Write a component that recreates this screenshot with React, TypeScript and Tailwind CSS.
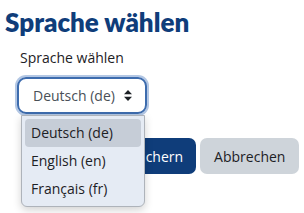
import React from 'react';

const options = ['Deutsch (de)', 'English (en)', 'Français (fr)'];

export default function App() {
  return (
    <div
      className="relative w-[304px] h-[213px] overflow-hidden bg-white"
      style={{ fontFamily: '"Open Sans", "Noto Sans", sans-serif' }}
    >
      <h2
        className="pl-[5px] pt-[7px] text-[26px] leading-[30px] font-extrabold text-[#0f3d7a]"
        style={{ fontFamily: 'Lato, "Open Sans", sans-serif' }}
      >
        Sprache wählen
      </h2>

      <div className="pl-[20px] mt-[11px] text-[14px] leading-[20px] text-[#1d2125]">Sprache wählen</div>

      {/* select with open list */}
      <div className="relative ml-[17px] mt-[9px] w-[130px]">
        <div className="flex h-[37px] items-center justify-between rounded-[9px] border-2 border-[#3d6cae] pl-[14px] pr-[13px] text-[14px] text-[#495057] ring-2 ring-[#b3c7e4]">
          <span>Deutsch (de)</span>
          <svg width="8" height="11" viewBox="0 0 8 11">
            <path d="M4 0 L8 4.2 L0 4.2 Z M4 11 L8 6.8 L0 6.8 Z" fill="#1d2125" />
          </svg>
        </div>

        <div className="absolute left-[4px] top-[38px] z-10 w-[124px] rounded-b-[6px] border border-[#aeb3ba] bg-[#e5ebf4] px-[3px] pt-[3px] pb-[3px] shadow-[0_3px_8px_rgba(0,0,0,0.18)]">
          {options.map((o, i) => (
            <div
              key={o}
              className={`h-[28px] rounded-[4px] pl-[6px] text-[14px] leading-[28px] text-[#1d2125] ${i === 0 ? 'bg-[#c6cdd7]' : ''}`}
            >
              {o}
            </div>
          ))}
        </div>
      </div>

      <div className="mt-[24px] flex gap-[4px] pl-[105px]">
        <button className="h-[36px] rounded-[7px] bg-[#0f3d7a] px-[13px] text-[14px] text-white">
          Speichern
        </button>
        <button className="h-[36px] rounded-[7px] bg-[#ced4da] px-[14px] text-[14px] text-[#1d2125]">
          Abbrechen
        </button>
      </div>
    </div>
  );
}
